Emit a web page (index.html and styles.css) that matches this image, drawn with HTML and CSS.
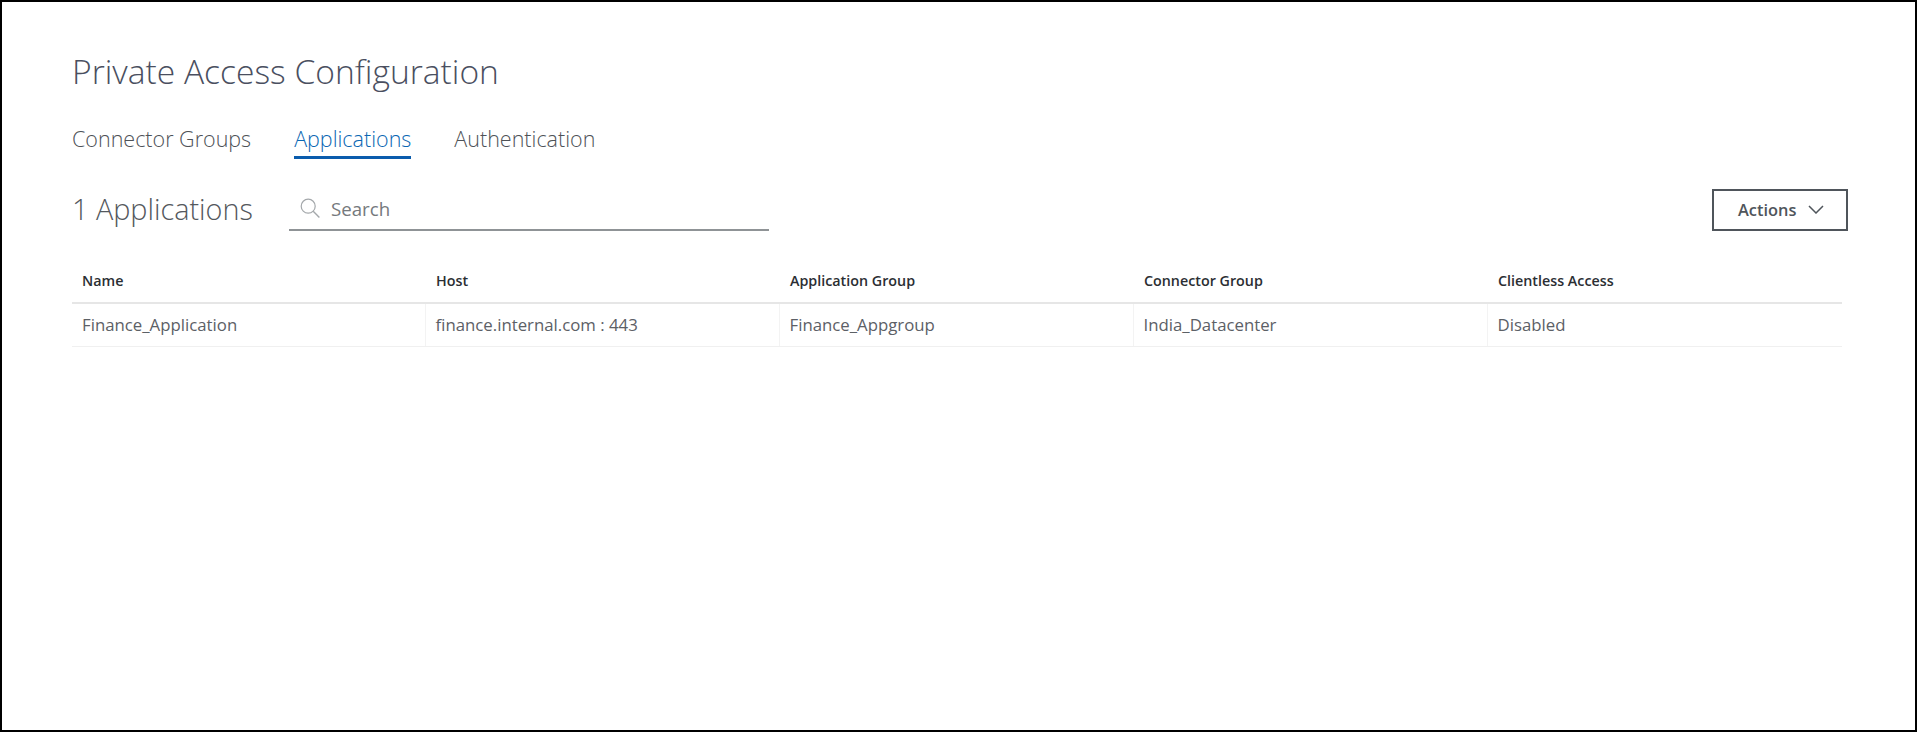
FILE: index.html
```html
<!DOCTYPE html>
<html lang="en">
<head>
<meta charset="utf-8">
<title>Private Access Configuration</title>
<link rel="stylesheet" href="styles.css">
</head>
<body>
<main class="frame">
  <h1 class="title">Private Access Configuration</h1>
  <nav class="tabs">
    <a class="tab">Connector Groups</a>
    <a class="tab active">Applications</a>
    <a class="tab">Authentication</a>
  </nav>
  <div class="toolbar">
    <h2 class="count">1 Applications</h2>
    <label class="search">
      <svg class="search-icon" viewBox="0 0 20 20" width="20" height="20" fill="none" stroke="#a4a8ab" stroke-width="1.2"><circle cx="8.2" cy="8.2" r="7"/><path d="M13.2 13.2 L19.4 19.4" stroke-width="1.4"/></svg>
      <span class="search-text">Search</span>
    </label>
    <button class="actions">
      <span>Actions</span>
      <svg viewBox="0 0 16 9" width="16" height="9" fill="none" stroke="#4f555b" stroke-width="1.5"><path d="M1 1 L8 8 L15 1"/></svg>
    </button>
  </div>
  <div class="table">
    <div class="row head">
      <div class="cell">Name</div>
      <div class="cell">Host</div>
      <div class="cell">Application Group</div>
      <div class="cell">Connector Group</div>
      <div class="cell">Clientless Access</div>
    </div>
    <div class="row body">
      <div class="cell">Finance_Application</div>
      <div class="cell">finance.internal.com : 443</div>
      <div class="cell">Finance_Appgroup</div>
      <div class="cell">India_Datacenter</div>
      <div class="cell">Disabled</div>
    </div>
  </div>
</main>
</body>
</html>
```

FILE: styles.css
```css
* { box-sizing: border-box; }
html, body { margin: 0; height: 100%; background: #fff; }
body { font-family: "Open Sans", "Liberation Sans", sans-serif; color: #54585d; }
.frame {
  height: 732px;
  border: 2px solid #000;
  padding: 46px 67px 0 70px;
  display: flex;
  flex-direction: column;
}
.title {
  margin: 0;
  font-size: 33.6px;
  font-weight: 300;
  line-height: 46px;
  color: #4a4f60;
}
.tabs { display: flex; gap: 43px; margin-top: 30px; }
.tab {
  font-size: 21.5px;
  font-weight: 300;
  line-height: 30px;
  padding-bottom: 2px;
  border-bottom: 3px solid transparent;
  color: #4e5257;
}
.tab.active { color: #0a67b3; border-bottom-color: #0a5cad; }
.toolbar { display: flex; align-items: center; margin-top: 30px; height: 42px; }
.count {
  margin: 0 37px 0 0;
  font-size: 28.8px;
  font-weight: 300;
  line-height: 40px;
  padding-bottom: 2px;
  color: #54585d;
  width: 180px;
  white-space: nowrap;
}
.search {
  width: 480px;
  height: 42px;
  border-bottom: 2px solid #8f9396;
  display: flex;
  align-items: center;
  gap: 11px;
  padding: 0 0 2px 11px;
}
.search-text { font-size: 18.7px; color: #75797d; }
.actions {
  margin-left: auto;
  width: 136px;
  height: 42px;
  border: 2px solid #4f555b;
  background: #fff;
  font: 600 16.4px "Open Sans", "Liberation Sans", sans-serif;
  color: #4f555b;
  display: flex;
  align-items: center;
  gap: 12px;
  padding: 0 0 2px 24px;
}
.table { margin-top: 22px; width: 1770px; }
.row { display: grid; grid-template-columns: repeat(5, 354px); }
.head { height: 51px; border-bottom: 2px solid #e6e6e6; align-items: center; padding-top: 5px; }
.head .cell { font-size: 14.3px; font-weight: 600; color: #2b2e33; padding-left: 10px; }
.body { height: 43px; border-bottom: 1px solid #f0f0f0; }
.body .cell { font-size: 16.8px; color: #5c6066; margin-left: -1px; padding-left: 9.5px; line-height: 42px; border-left: 1px solid #f3f3f3; }
.body .cell:first-child { border-left: 0; margin-left: 0; padding-left: 10px; }
```
